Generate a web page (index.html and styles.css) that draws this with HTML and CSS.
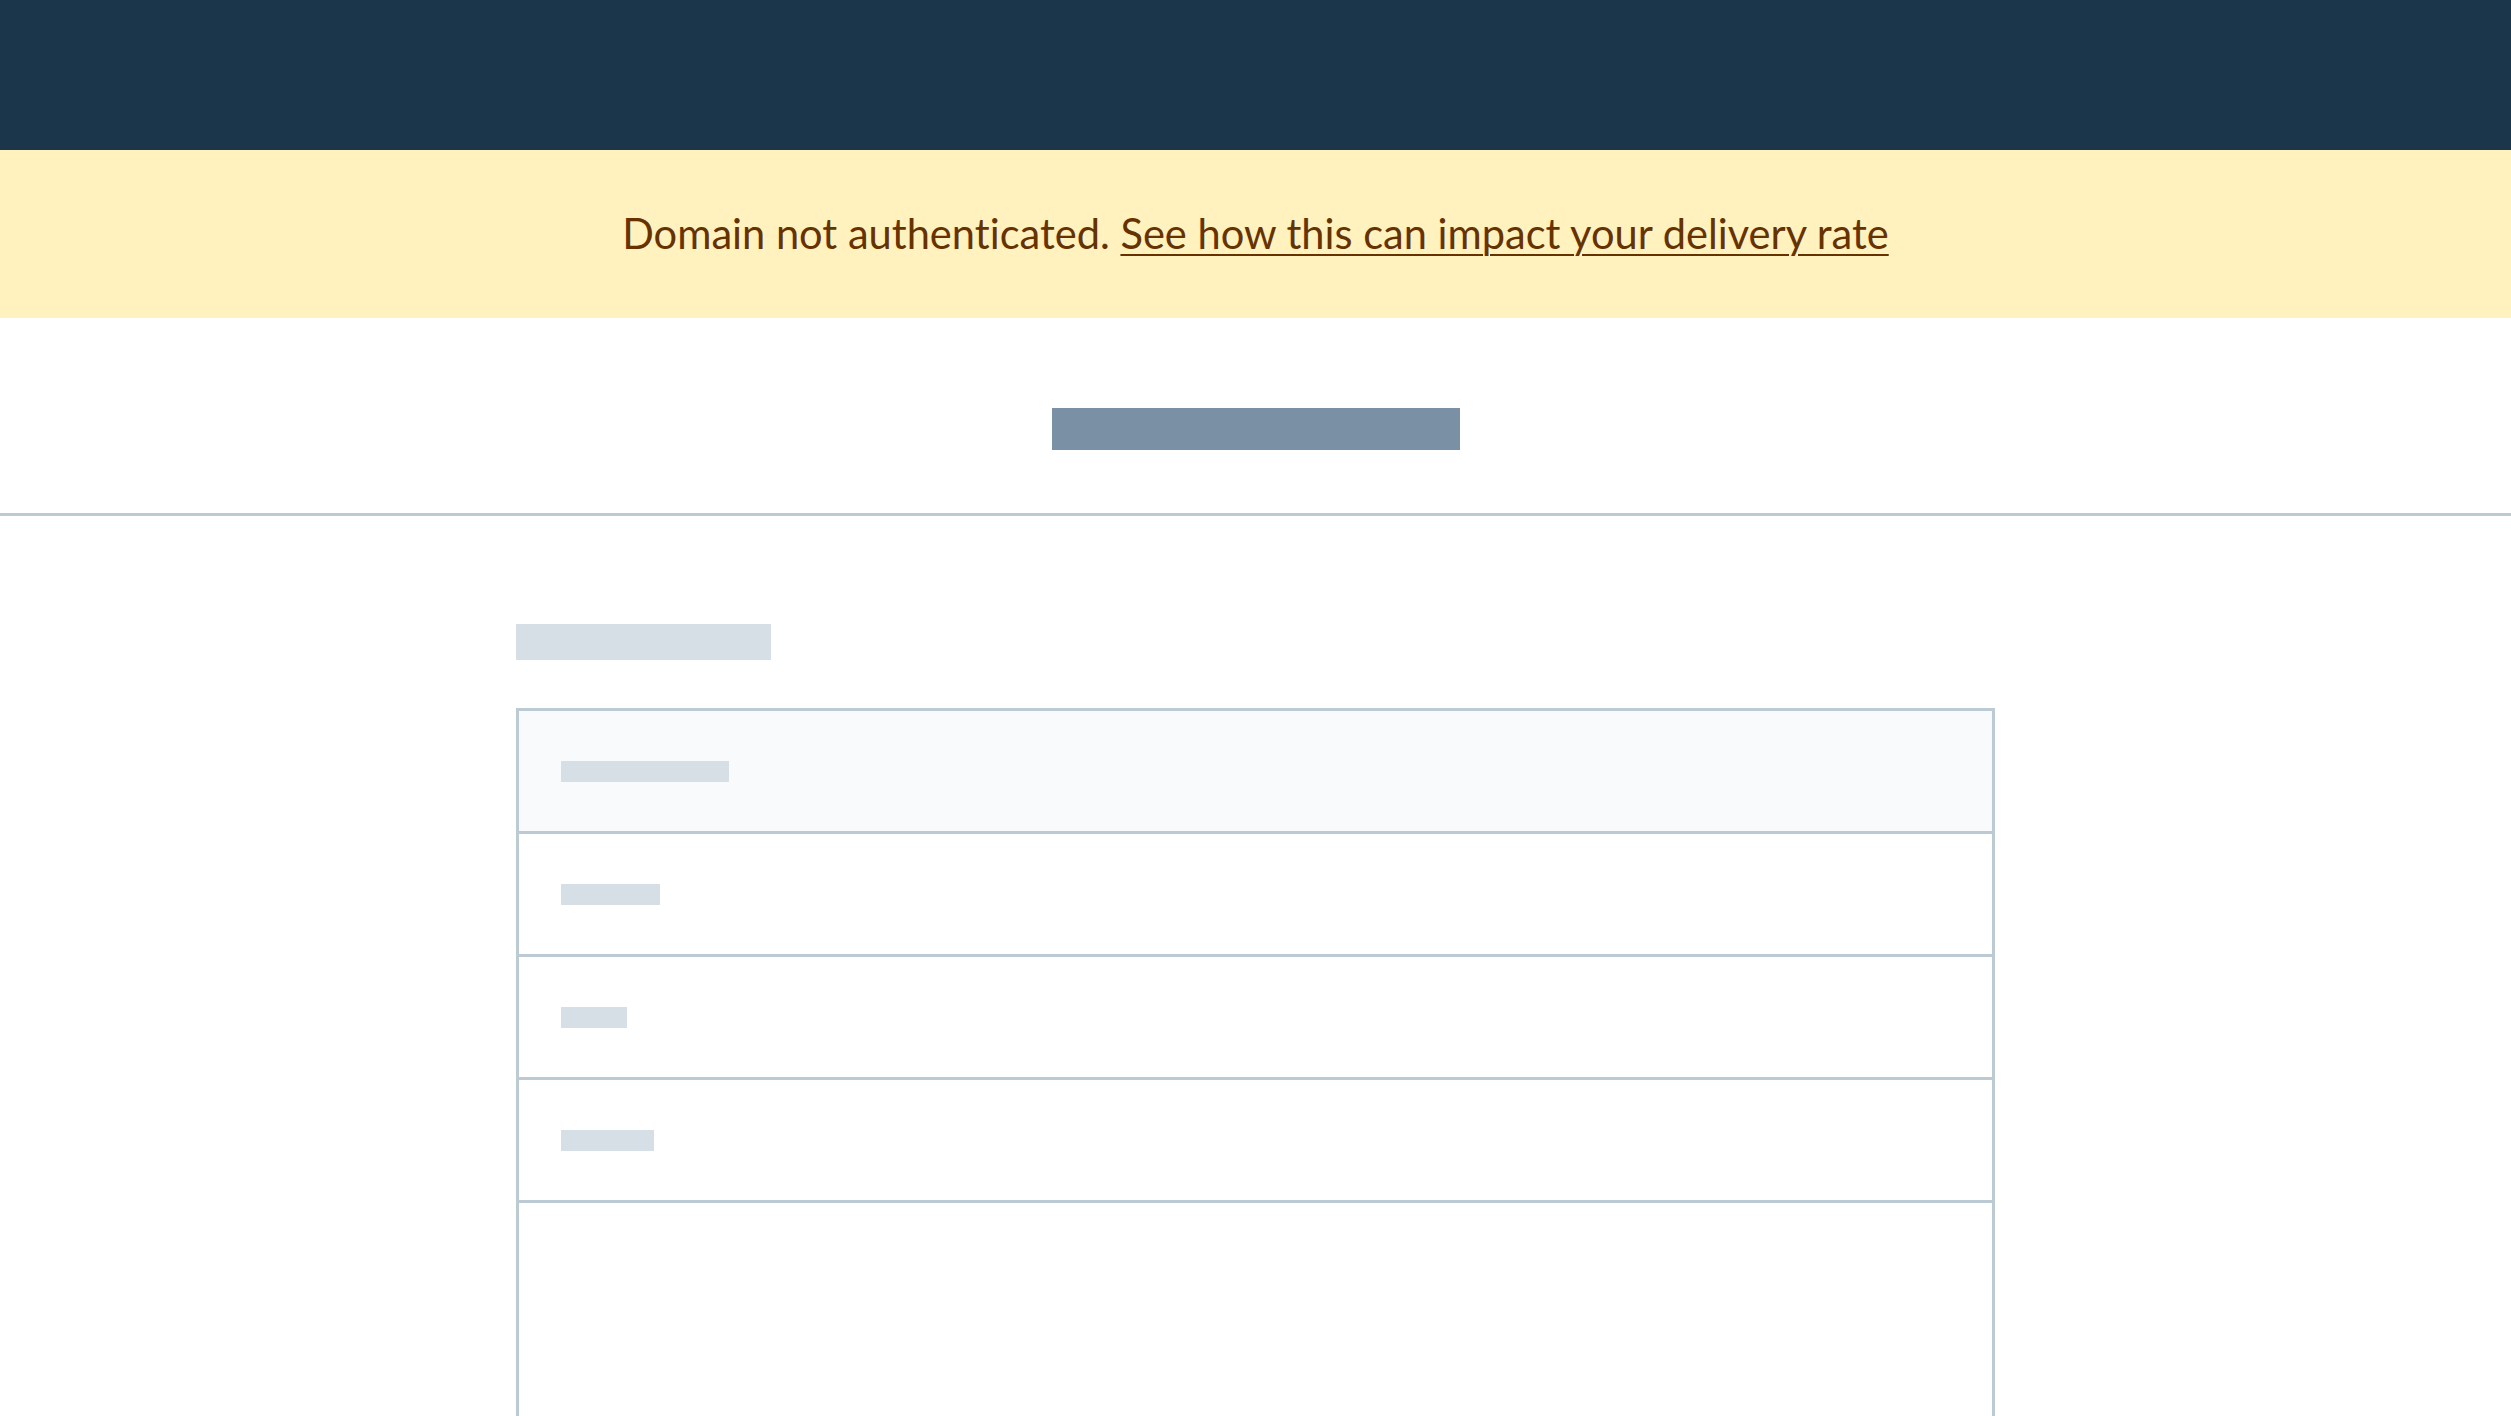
FILE: index.html
```html
<!DOCTYPE html>
<html lang="en">
<head>
<meta charset="utf-8">
<title>Domain</title>
<link rel="stylesheet" href="styles.css">
</head>
<body>
<header class="topbar"></header>
<div class="banner">
  <p class="banner-text">Domain not authenticated. <a href="#" class="banner-link">See how this can impact your delivery rate</a></p>
</div>
<section class="page-head">
  <div class="skel skel-heading"></div>
</section>
<main class="content">
  <div class="skel skel-title"></div>
  <div class="table">
    <div class="row row-head"><div class="skel skel-cell w168"></div></div>
    <div class="row"><div class="skel skel-cell w99"></div></div>
    <div class="row"><div class="skel skel-cell w66"></div></div>
    <div class="row"><div class="skel skel-cell w93"></div></div>
    <div class="row row-empty"></div>
  </div>
</main>
</body>
</html>
```
FILE: styles.css
```css
html, body {
  margin: 0;
  padding: 0;
  background: #ffffff;
  font-family: Lato, "Open Sans", sans-serif;
}

.topbar {
  height: 150px;
  background: #1b354b;
}

.banner {
  height: 168px;
  background: #fff2bf;
  display: flex;
  align-items: center;
  justify-content: center;
}

.banner-text {
  margin: 0;
  font-size: 41.6px;
  line-height: 48px;
  color: #663300;
  padding-bottom: 3px;
  font-variant-ligatures: none;
}

.banner-link {
  color: #663300;
  text-decoration: underline;
  text-decoration-thickness: 2px;
  text-underline-offset: 5px;
}

.page-head {
  border-bottom: 3px solid #bccad3;
  display: flex;
  justify-content: center;
  padding-top: 90px;
  box-sizing: border-box;
  height: 198px;
}

.skel {
  background: #d5dfe5;
}

.skel-heading {
  width: 408px;
  height: 42px;
  background: #7a90a4;
}

.content {
  width: 1479px;
  margin: 0 auto;
  padding-top: 108px;
}

.skel-title {
  width: 255px;
  height: 36px;
  margin-bottom: 48px;
}

.table {
  border: 3px solid #bccad3;
  border-bottom: none;
}

.row {
  height: 120px;
  border-bottom: 3px solid #bccad3;
  display: flex;
  align-items: center;
  padding-left: 42px;
}

.row-head {
  background: #f8fafb;
}

.row-empty {
  height: 400px;
  border-bottom: none;
}

.skel-cell {
  height: 21px;
}

.w168 { width: 168px; }
.w99 { width: 99px; }
.w66 { width: 66px; }
.w93 { width: 93px; }
```
